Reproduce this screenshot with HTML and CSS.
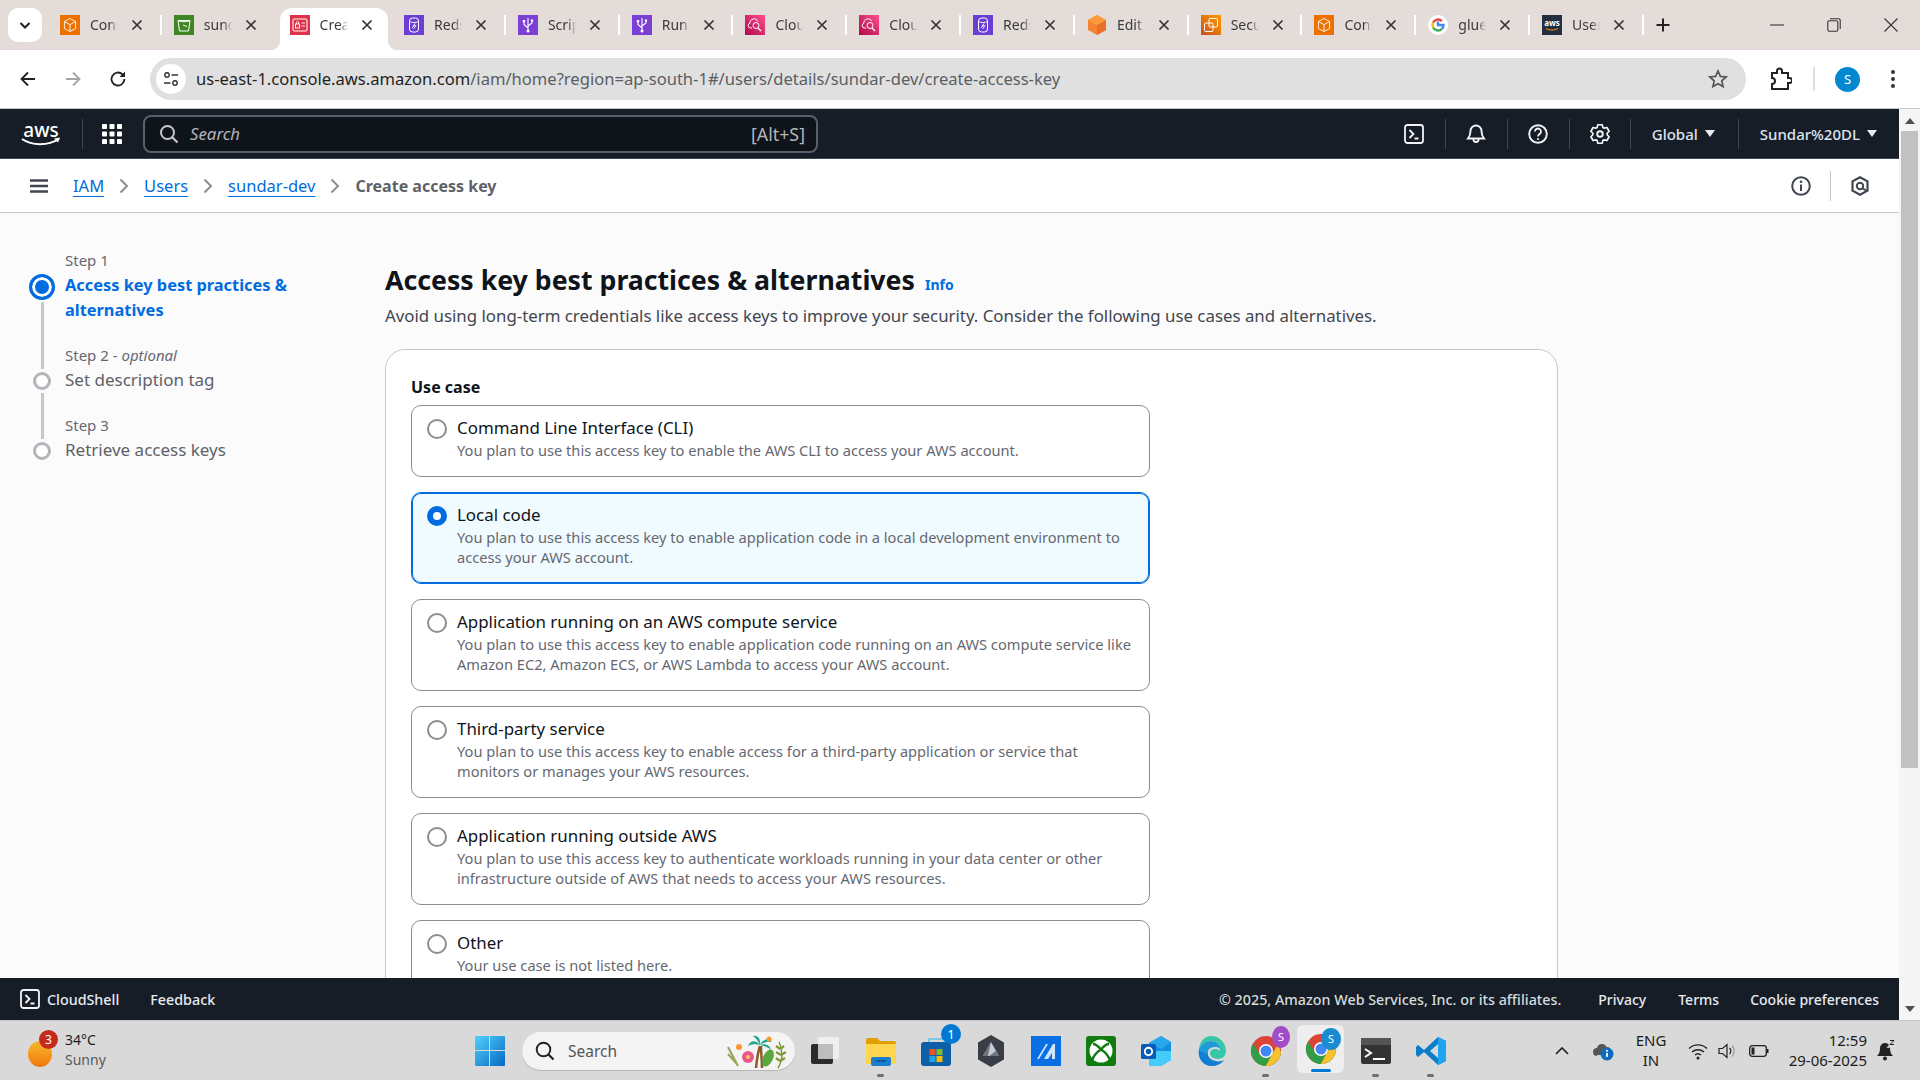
FILE: index.html
```html
<!DOCTYPE html>
<html lang="en">
<head>
<meta charset="utf-8">
<title>Create access key</title>
<link rel="stylesheet" href="styles.css">
</head>
<body>
<svg class="defs" width="0" height="0" aria-hidden="true">
  <symbol id="x" viewBox="0 0 12 12"><path d="M1.5 1.5l9 9M10.5 1.5l-9 9" fill="none" stroke="#333" stroke-width="1.7"/></symbol>
  <symbol id="cube" viewBox="0 0 20 20"><rect width="20" height="20" fill="#ed7100"/><path d="M10 3.5l5.6 3v7L10 16.5l-5.6-3v-7zM4.4 6.5L10 9.6l5.6-3.1M10 9.6v6.9" fill="none" stroke="#fff" stroke-width=".9"/></symbol>
  <symbol id="db" viewBox="0 0 20 20"><rect width="20" height="20" fill="#6b3fd4"/><rect x="5.5" y="3" width="9" height="14" rx="3" fill="none" stroke="#fff" stroke-width="1"/><path d="M5.5 6.5c2 1.4 7 1.4 9 0M8 13l2-2.400 1.800 0-2 3.200M11 8.500l-2 2.500" fill="none" stroke="#fff" stroke-width=".9"/></symbol>
  <symbol id="usb" viewBox="0 0 20 20"><rect width="20" height="20" fill="#7c3fd6"/><path d="M10 3v14M10 13L6 9.500V7M10 11l4-3V6" fill="none" stroke="#fff" stroke-width="1.100"/><circle cx="10" cy="16" r="1.500" fill="#fff"/><rect x="4.800" y="5" width="2.400" height="2.400" fill="#fff"/><circle cx="14" cy="5.500" r="1.200" fill="#fff"/></symbol>
  <symbol id="cloud" viewBox="0 0 20 20"><defs><linearGradient id="pk" x1="0" y1="1" x2="1" y2="0"><stop offset="0" stop-color="#b0084d"/><stop offset="1" stop-color="#ff4f8b"/></linearGradient></defs><rect width="20" height="20" fill="url(#pk)"/><path d="M7 13H5.500a2.500 2.500 0 0 1-.5-4.900A3.500 3.500 0 0 1 8.200 4a3.500 3.500 0 0 1 4.300 2.200" fill="none" stroke="#fff" stroke-width="1"/><circle cx="11" cy="10.500" r="3" fill="none" stroke="#fff" stroke-width="1"/><path d="M13 13l3 3" stroke="#fff" stroke-width="1.200"/></symbol>
  <symbol id="boxes" viewBox="0 0 20 20"><defs><linearGradient id="or" x1="0" y1="1" x2="1" y2="0"><stop offset="0" stop-color="#c8511b"/><stop offset="1" stop-color="#ff9900"/></linearGradient></defs><rect width="20" height="20" fill="url(#or)"/><rect x="8" y="3.500" width="8.500" height="8.500" rx="1" fill="none" stroke="#fff" stroke-width="1"/><rect x="3.500" y="8" width="8.500" height="8.500" rx="1" fill="none" stroke="#fff" stroke-width="1"/></symbol>
  <symbol id="shell" viewBox="0 0 20 20"><rect x="1" y="1" width="18" height="18" rx="2.500" fill="none" stroke="currentColor" stroke-width="1.800"/><path d="M5.500 6l4 4-4 4M10.500 14.500h4" fill="none" stroke="currentColor" stroke-width="1.800"/></symbol>
  <symbol id="chrome" viewBox="0 0 32 32"><circle cx="16" cy="16" r="15" fill="#db4437"/><path d="M16 16L3 23.500A15 15 0 0 1 3 8.500L9 18z" fill="#2f9e44"/><path d="M3 23.500A15 15 0 0 0 31 16H16z" fill="#2f9e44"/><path d="M31 16a15 15 0 0 1-15 15l7-13z" fill="#fbc02d"/><path d="M28 8.500A15 15 0 0 1 16 31l7-13z" fill="#fbc02d"/><circle cx="16" cy="16" r="7" fill="#fff"/><circle cx="16" cy="16" r="5.500" fill="#4285f4"/></symbol>
</svg>

<header class="tabstrip">
  <button class="tab-menu"><svg width="14" height="14" viewBox="0 0 14 14"><path d="M2.500 5l4.500 4.500L11.500 5" fill="none" stroke="#222" stroke-width="2"/></svg></button>
  <div class="tab"><svg class="fav"><use href="#cube"/></svg><span class="tab-label">Console Home</span><svg class="tab-x"><use href="#x"/></svg><i class="tab-sep"></i></div>
  <div class="tab"><svg class="fav" viewBox="0 0 20 20"><rect width="20" height="20" fill="#3f8624"/><path d="M4 5.500h12l-1.500 10.500h-9zM4 5.500c2 1.600 10 1.600 12 0M9 10l4 1.500" fill="none" stroke="#fff" stroke-width="1"/></svg><span class="tab-label">sundar bucket</span><svg class="tab-x"><use href="#x"/></svg></div>
  <div class="tab active"><svg class="fav" viewBox="0 0 20 20"><rect width="20" height="20" fill="#dd344c"/><rect x="3" y="4" width="14" height="12" rx="1" fill="none" stroke="#fff" stroke-width="1"/><rect x="5.500" y="9" width="4" height="4" fill="none" stroke="#fff" stroke-width=".9"/><path d="M6.500 9V7.500a1 1 0 0 1 2 0V9M11.500 8h3.500M11.500 11h3.500" fill="none" stroke="#fff" stroke-width=".9"/></svg><span class="tab-label">Create access key</span><svg class="tab-x"><use href="#x"/></svg></div>
  <div class="tab"><svg class="fav"><use href="#db"/></svg><span class="tab-label">Redshift</span><svg class="tab-x"><use href="#x"/></svg><i class="tab-sep"></i></div>
  <div class="tab"><svg class="fav"><use href="#usb"/></svg><span class="tab-label">Script editor</span><svg class="tab-x"><use href="#x"/></svg><i class="tab-sep"></i></div>
  <div class="tab"><svg class="fav"><use href="#usb"/></svg><span class="tab-label">Run details</span><svg class="tab-x"><use href="#x"/></svg><i class="tab-sep"></i></div>
  <div class="tab"><svg class="fav"><use href="#cloud"/></svg><span class="tab-label">CloudWatch</span><svg class="tab-x"><use href="#x"/></svg><i class="tab-sep"></i></div>
  <div class="tab"><svg class="fav"><use href="#cloud"/></svg><span class="tab-label">CloudWatch</span><svg class="tab-x"><use href="#x"/></svg><i class="tab-sep"></i></div>
  <div class="tab"><svg class="fav"><use href="#db"/></svg><span class="tab-label">Redshift</span><svg class="tab-x"><use href="#x"/></svg><i class="tab-sep"></i></div>
  <div class="tab"><svg class="fav" viewBox="0 0 20 20"><path d="M10 0l9 5v10l-9 5-9-5V5z" fill="#f58534"/><path d="M10 10l9-5v10l-9 5z" fill="#e8702a"/><path d="M10 0l9 5-9 5-9-5z" fill="#ff9a3c"/></svg><span class="tab-label">Edit rule</span><svg class="tab-x"><use href="#x"/></svg><i class="tab-sep"></i></div>
  <div class="tab"><svg class="fav"><use href="#boxes"/></svg><span class="tab-label">Security</span><svg class="tab-x"><use href="#x"/></svg><i class="tab-sep"></i></div>
  <div class="tab"><svg class="fav"><use href="#cube"/></svg><span class="tab-label">Console Home</span><svg class="tab-x"><use href="#x"/></svg><i class="tab-sep"></i></div>
  <div class="tab"><svg class="fav" viewBox="0 0 20 20"><circle cx="10" cy="10" r="10" fill="#fff"/><path d="M10 6.500V10h5.500a5.700 5.700 0 0 1-1.700 4" fill="none" stroke="#4285f4" stroke-width="2.400"/><path d="M13.800 14a5.500 5.500 0 0 1-8.700-1.500" fill="none" stroke="#34a853" stroke-width="2.400"/><path d="M5.100 12.500a5.500 5.500 0 0 1 0-5" fill="none" stroke="#fbbc05" stroke-width="2.400"/><path d="M5.100 7.500a5.500 5.500 0 0 1 8.700-1.400" fill="none" stroke="#ea4335" stroke-width="2.400"/></svg><span class="tab-label">glue crawler</span><svg class="tab-x"><use href="#x"/></svg><i class="tab-sep"></i></div>
  <div class="tab"><svg class="fav" viewBox="0 0 20 20"><rect width="20" height="20" fill="#232f3e"/><text x="10" y="11" class="fav-aws">aws</text><path d="M4 13.500c3.500 2 8.500 2 12 0" fill="none" stroke="#f90" stroke-width="1"/></svg><span class="tab-label">Users</span><svg class="tab-x"><use href="#x"/></svg><i class="tab-sep"></i></div>
  <svg class="new-tab" width="16" height="16" viewBox="0 0 16 16"><path d="M8 1.500v13M1.500 8h13" stroke="#222" stroke-width="2"/></svg>
  <div class="win-ctrls">
    <svg width="14" height="14" viewBox="0 0 14 14"><path d="M0 7h14" stroke="#333" stroke-width="1.100"/></svg>
    <svg width="14" height="14" viewBox="0 0 14 14"><rect x=".8" y="2.800" width="10" height="10.400" rx="1.500" fill="none" stroke="#333" stroke-width="1.100"/><path d="M3 .8h8.700a1.500 1.500 0 0 1 1.500 1.500V11" fill="none" stroke="#333" stroke-width="1.100"/></svg>
    <svg width="14" height="14" viewBox="0 0 14 14"><path d="M.5.500l13 13M13.500.500l-13 13" stroke="#333" stroke-width="1.100"/></svg>
  </div>
</header>

<nav class="toolbar">
  <div class="nav-btns">
    <svg width="18" height="18" viewBox="0 0 18 18"><path d="M16 9H3M9 2.500L2.500 9 9 15.500" fill="none" stroke="#222" stroke-width="1.800"/></svg>
    <svg width="18" height="18" viewBox="0 0 18 18"><path d="M2 9h13M9 2.500L15.500 9 9 15.500" fill="none" stroke="#a5a5a5" stroke-width="1.800"/></svg>
    <svg width="18" height="18" viewBox="0 0 18 18"><path d="M15.500 9a6.500 6.500 0 1 1-2-4.700L15.500 6" fill="none" stroke="#222" stroke-width="1.800"/><path d="M16 1.500V7h-5.500z" fill="#222"/></svg>
  </div>
  <div class="omnibox">
    <span class="site-info"><svg width="16" height="16" viewBox="0 0 16 16"><circle cx="4" cy="4" r="2.200" fill="none" stroke="#333" stroke-width="1.400"/><path d="M8.500 4H15M1 12h6.500" stroke="#333" stroke-width="1.400"/><circle cx="12" cy="12" r="2.200" fill="none" stroke="#333" stroke-width="1.400"/></svg></span>
    <span class="url"><b>us-east-1.console.aws.amazon.com</b>/iam/home?region=ap-south-1#/users/details/sundar-dev/create-access-key</span>
    <svg class="star" width="20" height="20" viewBox="0 0 20 20"><path d="M10 2l2.400 5.400 5.800.6-4.400 3.900 1.300 5.700L10 14.700l-5.100 2.900 1.300-5.700L1.800 8l5.800-.6z" fill="none" stroke="#555" stroke-width="1.700"/></svg>
  </div>
  <div class="tool-right">
    <svg class="ext" width="22" height="24" viewBox="0 0 22 24"><path d="M2 6h5V4a2.500 2.500 0 0 1 5 0v2h6v5h1.500a2.500 2.500 0 0 1 0 5H18v6H2v-5a3 3 0 0 0 0-6z" fill="none" stroke="#222" stroke-width="2"/></svg>
    <i class="tool-div"></i>
    <span class="avatar">S</span>
    <svg class="dots" width="6" height="20" viewBox="0 0 6 20"><circle cx="3" cy="3" r="2" fill="#333"/><circle cx="3" cy="10" r="2" fill="#333"/><circle cx="3" cy="17" r="2" fill="#333"/></svg>
  </div>
</nav>

<div class="window">
  <div class="console">
    <div class="awsbar">
      <a class="aws-logo"><svg width="40" height="28" viewBox="0 0 40 28"><text x="20" y="17" class="aws-text">aws</text><path d="M1 19c10 7 26 7 37 0" fill="none" stroke="#fff" stroke-width="2"/><path d="M33 18.500l6-1-2 5" fill="#fff"/></svg></a>
      <i class="bar-div logo-div"></i>
      <svg class="grid-ic" width="20" height="20" viewBox="0 0 20 20" fill="#fff"><rect width="5" height="5" rx=".8"/><rect x="7.500" width="5" height="5" rx=".8"/><rect x="15" width="5" height="5" rx=".8"/><rect y="7.500" width="5" height="5" rx=".8"/><rect x="7.500" y="7.500" width="5" height="5" rx=".8"/><rect x="15" y="7.500" width="5" height="5" rx=".8"/><rect y="15" width="5" height="5" rx=".8"/><rect x="7.500" y="15" width="5" height="5" rx=".8"/><rect x="15" y="15" width="5" height="5" rx=".8"/></svg>
      <div class="aws-search">
        <svg width="20" height="20" viewBox="0 0 20 20"><circle cx="8.500" cy="8.500" r="6.500" fill="none" stroke="#c6c6cd" stroke-width="2"/><path d="M13 13l5.500 5.500" stroke="#c6c6cd" stroke-width="2.200"/></svg>
        <span class="ph">Search</span>
        <span class="kbd">[Alt+S]</span>
      </div>
      <div class="bar-right">
        <svg class="bar-ic" viewBox="0 0 20 20"><use href="#shell"/></svg>
        <i class="bar-div"></i>
        <svg class="bar-ic" viewBox="0 0 20 20"><path d="M10 1.500a5.500 5.500 0 0 1 5.500 5.500c0 4 .8 5.500 2.500 7.500H2c1.700-2 2.500-3.500 2.500-7.500A5.500 5.500 0 0 1 10 1.500zM7.500 15.500a2.500 2.500 0 0 0 5 0" fill="none" stroke="currentColor" stroke-width="1.900"/></svg>
        <i class="bar-div"></i>
        <svg class="bar-ic" viewBox="0 0 20 20"><circle cx="10" cy="10" r="8.800" fill="none" stroke="currentColor" stroke-width="1.900"/><path d="M7 7.500a3 3 0 1 1 4.500 2.600c-1 .6-1.500 1.100-1.500 2.400" fill="none" stroke="currentColor" stroke-width="1.800"/><circle cx="10" cy="15" r="1.100" fill="currentColor"/></svg>
        <i class="bar-div"></i>
        <svg class="bar-ic gear" viewBox="0 0 20 20"><path d="M7.070 3.420L7.860.75h4.280l.79 2.670 1.300.76 2.710-.66 2.140 3.700-1.920 2.020v1.520l1.920 2.020-2.140 3.700-2.710-.66-1.300.76-.79 2.670H7.860l-.79-2.670-1.300-.76-2.710.66-2.140-3.700 1.920-2.020V9.240L.92 7.220l2.140-3.700 2.710.66z" fill="none" stroke="currentColor" stroke-width="1.700" stroke-linejoin="round"/><circle cx="10" cy="10" r="2.800" fill="none" stroke="currentColor" stroke-width="1.900"/></svg>
        <i class="bar-div"></i>
        <span class="bar-menu region">Global <i class="caret"></i></span>
        <i class="bar-div"></i>
        <span class="bar-menu account">Sundar%20DL <i class="caret"></i></span>
      </div>
    </div>

    <div class="crumbs">
      <svg class="burger" width="18" height="14" viewBox="0 0 18 14"><path d="M0 1.500h18M0 7h18M0 12.500h18" stroke="#424650" stroke-width="2.400"/></svg>
      <a class="crumb">IAM</a>
      <svg class="chev" width="10" height="16" viewBox="0 0 10 16"><path d="M1.500 1.500L8 8l-6.500 6.500" fill="none" stroke="#8c8c94" stroke-width="2"/></svg>
      <a class="crumb">Users</a>
      <svg class="chev" width="10" height="16" viewBox="0 0 10 16"><path d="M1.500 1.500L8 8l-6.500 6.500" fill="none" stroke="#8c8c94" stroke-width="2"/></svg>
      <a class="crumb">sundar-dev</a>
      <svg class="chev" width="10" height="16" viewBox="0 0 10 16"><path d="M1.500 1.500L8 8l-6.500 6.500" fill="none" stroke="#8c8c94" stroke-width="2"/></svg>
      <span class="crumb-current">Create access key</span>
      <div class="crumb-tools">
        <svg width="20" height="20" viewBox="0 0 20 20"><circle cx="10" cy="10" r="8.800" fill="none" stroke="#424650" stroke-width="2"/><path d="M10 8.500V15" stroke="#424650" stroke-width="2"/><circle cx="10" cy="5.700" r="1.300" fill="#424650"/></svg>
        <i class="crumb-div"></i>
        <svg width="18" height="20" viewBox="0 0 18 20"><path d="M9 1.200l7.500 4.200v9.200L9 18.800l-7.500-4.200V5.400z" fill="none" stroke="#424650" stroke-width="2.200"/><circle cx="9" cy="10" r="3.200" fill="none" stroke="#424650" stroke-width="2"/><path d="M11 12l5 3" stroke="#424650" stroke-width="2"/></svg>
      </div>
    </div>

    <div class="content">
      <ol class="steps">
        <li class="step">
          <div class="step-label">Step 1</div>
          <div class="track"><i class="dot current"></i><i class="line first"></i></div>
          <div class="step-title current-title">Access key best practices &amp; alternatives</div>
        </li>
        <li class="step">
          <div class="step-label">Step 2 - <em>optional</em></div>
          <div class="track"><i class="dot"></i><i class="line"></i></div>
          <div class="step-title">Set description tag</div>
        </li>
        <li class="step">
          <div class="step-label">Step 3</div>
          <div class="track"><i class="dot"></i></div>
          <div class="step-title">Retrieve access keys</div>
        </li>
      </ol>
      <main class="main">
        <div class="head"><h1>Access key best practices &amp; alternatives</h1><a class="info">Info</a></div>
        <p class="lede">Avoid using long-term credentials like access keys to improve your security. Consider the following use cases and alternatives.</p>
        <section class="card">
          <div class="field-label">Use case</div>
          <div class="options">
            <label class="option"><i class="radio"></i><div class="opt-text"><div class="opt-title">Command Line Interface (CLI)</div><div class="opt-desc">You plan to use this access key to enable the AWS CLI to access your AWS account.</div></div></label>
            <label class="option selected"><i class="radio on"></i><div class="opt-text"><div class="opt-title">Local code</div><div class="opt-desc">You plan to use this access key to enable application code in a local development environment to access your AWS account.</div></div></label>
            <label class="option"><i class="radio"></i><div class="opt-text"><div class="opt-title">Application running on an AWS compute service</div><div class="opt-desc">You plan to use this access key to enable application code running on an AWS compute service like Amazon EC2, Amazon ECS, or AWS Lambda to access your AWS account.</div></div></label>
            <label class="option"><i class="radio"></i><div class="opt-text"><div class="opt-title">Third-party service</div><div class="opt-desc">You plan to use this access key to enable access for a third-party application or service that monitors or manages your AWS resources.</div></div></label>
            <label class="option"><i class="radio"></i><div class="opt-text"><div class="opt-title">Application running outside AWS</div><div class="opt-desc">You plan to use this access key to authenticate workloads running in your data center or other infrastructure outside of AWS that needs to access your AWS resources.</div></div></label>
            <label class="option"><i class="radio"></i><div class="opt-text"><div class="opt-title">Other</div><div class="opt-desc">Your use case is not listed here.</div></div></label>
          </div>
        </section>
      </main>
    </div>

    <footer class="foot">
      <svg class="foot-ic" viewBox="0 0 20 20"><use href="#shell"/></svg>
      <span class="foot-cs">CloudShell</span>
      <span class="foot-fb">Feedback</span>
      <span class="foot-copy">© 2025, Amazon Web Services, Inc. or its affiliates.</span>
      <span class="foot-priv">Privacy</span>
      <span class="foot-terms">Terms</span>
      <span class="foot-cookie">Cookie preferences</span>
    </footer>
  </div>
  <aside class="scrollbar">
    <i class="arrow up"></i>
    <i class="thumb"></i>
    <i class="arrow down"></i>
  </aside>
</div>

<footer class="taskbar">
  <div class="weather">
    <span class="sun"><b class="badge red">3</b></span>
    <div class="wx-text"><div>34°C</div><div class="wx-sub">Sunny</div></div>
  </div>
  <svg class="win-logo" width="30" height="30" viewBox="0 0 30 30"><defs><linearGradient id="w" x1="0" y1="0" x2="1" y2="1"><stop offset="0" stop-color="#52d1fb"/><stop offset="1" stop-color="#0669c4"/></linearGradient></defs><path d="M1 0h13v14H0V1a1 1 0 0 1 1-1zM15 0h14a1 1 0 0 1 1 1v13H15zM0 15h14v15H1a1 1 0 0 1-1-1zM15 15h15v14a1 1 0 0 1-1 1H15z" fill="url(#w)"/></svg>
  <div class="task-search">
    <svg width="20" height="20" viewBox="0 0 20 20"><circle cx="8.500" cy="8.500" r="6.800" fill="none" stroke="#222" stroke-width="1.900"/><path d="M13.500 13.500l5 5" stroke="#222" stroke-width="2.200"/></svg>
    <span>Search</span>
    <svg class="palm" width="66" height="38" viewBox="0 0 66 38"><path d="M3 15l10 19M3 22l9 10" stroke="#9aa35a" stroke-width="2" fill="none"/><circle cx="14" cy="15" r="3" fill="#f59c2d"/><circle cx="23" cy="25" r="6" fill="#e9578e"/><circle cx="23" cy="25" r="2" fill="#f6d04d"/><path d="M31 36c1-10 2-16 4-22M37 36c0-8-1-14-1-22" stroke="#8a5a2b" stroke-width="2.500" fill="none"/><path d="M35 13c-5-6-10-4-12 1 4-2 8-2 12-1zM35 13c1-7-3-10-7-9 3 2 5 5 7 9zM35 13c4-7 9-7 12-3-4-1-8 0-12 3zM35 13c5-2 10 0 11 5-3-3-7-4-11-5z" fill="#22a78a"/><ellipse cx="43" cy="26" rx="5" ry="9" fill="#58a83e" transform="rotate(25 43 26)"/><circle cx="44" cy="7" r="2.500" fill="#f59c2d"/><path d="M54 10c4 8 4 18-1 26" stroke="#7e9a3a" stroke-width="1.500" fill="none"/><path d="M51 14l4 3M59 14l-4 3M51 20l5 3M61 20l-5 3M51 26l4 3M60 26l-5 3" stroke="#7e9a3a" stroke-width="2.200"/></svg>
  </div>
  <div class="task-apps">
    <div class="app task-view"><svg width="30" height="30" viewBox="0 0 30 30"><rect x="2" y="8" width="22" height="20" rx="2" fill="#2b2b2b"/><rect x="9" y="1" width="21" height="22" rx="2" fill="#f2f2f2" opacity=".85"/><rect x="9" y="8" width="15" height="15" fill="#bdbdbd"/></svg></div>
    <div class="app running"><svg width="30" height="30" viewBox="0 0 30 30"><path d="M0 4a2 2 0 0 1 2-2h9l3 3h14a2 2 0 0 1 2 2v21H0z" fill="#e0a100"/><path d="M0 8h30v20H0z" fill="#fdd54f"/><rect x="5" y="21" width="20" height="9" rx="2" fill="#1a7fcf"/><path d="M10 25h10" stroke="#0c4f8a" stroke-width="1.500"/></svg></div>
    <div class="app"><svg width="30" height="30" viewBox="0 0 30 30"><path d="M8 6V3h14" fill="none" stroke="#5cc2ee" stroke-width="1.500"/><rect x="0" y="6" width="30" height="24" rx="3" fill="#0d5fa8"/><rect x="8.500" y="13" width="6" height="6" fill="#e8532b"/><rect x="15.500" y="13" width="6" height="6" fill="#7fba2a"/><rect x="8.500" y="20" width="6" height="6" fill="#1da6e8"/><rect x="15.500" y="20" width="6" height="6" fill="#fbbc05"/></svg><b class="badge blue">1</b></div>
    <div class="app"><svg width="28" height="34" viewBox="0 0 28 34"><path d="M14 1l13 7.500v17L14 33 1 25.500v-17z" fill="#3a3f47"/><path d="M14 8l8 14H6z" fill="#c9ced4"/><path d="M14 8l-3 14H6zM12 22h10l-3-5z" fill="#6f757e"/></svg></div>
    <div class="app"><svg width="30" height="30" viewBox="0 0 30 30"><rect width="30" height="30" fill="#0a6fe3"/><path d="M6 23L15 8h2L8 23zM13 23l9-15h2v15h-3v-6l-4 6z" fill="#cfe6ff"/></svg></div>
    <div class="app"><svg width="30" height="30" viewBox="0 0 30 30"><rect width="30" height="30" rx="3" fill="#107c10"/><circle cx="15" cy="15" r="11.500" fill="#fff"/><path d="M15 13.500C12 10 9 8 7 8M15 13.500C18 10 21 8 23 8M6 24c2-5 5-8 9-10.500 4 2.500 7 5.500 9 10.500" fill="none" stroke="#107c10" stroke-width="2.500"/></svg></div>
    <div class="app"><svg width="30" height="32" viewBox="0 0 30 32"><path d="M8 8l12-7 10 6v18l-10 6H8z" fill="#1490df"/><path d="M20 1l10 6-10 7-12-6z" fill="#28a8ea"/><path d="M8 16h22v9l-10 6H8z" fill="#50d9ff" opacity=".8"/><rect x="0" y="9" width="15" height="15" rx="1.500" fill="#0a5bb5"/><circle cx="7.500" cy="16.500" r="3.700" fill="none" stroke="#fff" stroke-width="1.900"/></svg></div>
    <div class="app"><svg width="30" height="32" viewBox="0 0 30 32"><path d="M15 1a15 15 0 0 1 15 15c0 5-4 8-8 8-5 0-8-3-8-6 0-2 2-4 5-4 4 0 5 2 5 2C24 9 20 6 15 6 9 6 5 10 3 14 4 6 9 1 15 1z" fill="#37c6a8"/><path d="M3 14C1 24 8 31 15 31c6 0 10-2 13-6-2 1-5 2-8 1-7-1-9-6-8-10-4 0-7 0-9-2z" fill="#0f7ed4"/><path d="M3 14c2-4 6-8 12-8 5 0 9 3 9 8 0 0-1-2-5-2-6 0-8 4-7 7-4-1-8-2-9-5z" fill="#1f9bd9"/></svg></div>
    <div class="app running"><svg width="32" height="32"><use href="#chrome"/></svg><b class="badge purple">S</b></div>
    <div class="app active running"><svg width="32" height="32"><use href="#chrome"/></svg><b class="badge sky">S</b></div>
    <div class="app running"><svg width="30" height="26" viewBox="0 0 30 26"><rect width="30" height="26" rx="2" fill="#333"/><rect width="30" height="7" fill="#555"/><path d="M4 11l6 4-6 4M12 21h12" fill="none" stroke="#fff" stroke-width="2"/></svg></div>
    <div class="app running"><svg width="30" height="30" viewBox="0 0 30 30"><path d="M22 1l8 4v20l-8 4-14-13L2 21l-2-2v-8l2-2 6 5z" fill="#0a7ec9"/><path d="M22 1l8 4v20l-8 4z" fill="#1fa4f1"/><path d="M22 8l-8 7 8 7z" fill="#d9d9d9"/></svg></div>
  </div>
  <div class="tray">
    <svg class="t-caret" width="14" height="9" viewBox="0 0 14 9"><path d="M1 8l6-6 6 6" fill="none" stroke="#222" stroke-width="1.600"/></svg>
    <svg class="t-cloud" width="22" height="20" viewBox="0 0 22 20"><path d="M5 15a4 4 0 0 1 0-8 5 5 0 0 1 9.500-1A4 4 0 0 1 15 14H5z" fill="#555"/><circle cx="15" cy="13" r="6.500" fill="#0f6cbd"/><path d="M15 12v4" stroke="#fff" stroke-width="1.800"/><circle cx="15" cy="9.800" r="1.100" fill="#fff"/></svg>
    <div class="t-lang"><div>ENG</div><div>IN</div></div>
    <svg class="t-wifi" width="20" height="18" viewBox="0 0 20 18"><path d="M1 6.500a13 13 0 0 1 18 0M4 10a9 9 0 0 1 12 0M7 13a4.500 4.500 0 0 1 6 0" fill="none" stroke="#222" stroke-width="1.400"/><circle cx="10" cy="16" r="1.500" fill="#222"/></svg>
    <svg class="t-vol" width="20" height="18" viewBox="0 0 20 18"><path d="M1 6.500h3.500L9 2.500v13l-4.500-4H1z" fill="none" stroke="#222" stroke-width="1.200"/><path d="M11.500 6a4 4 0 0 1 0 6" fill="none" stroke="#222" stroke-width="1.200"/><path d="M14 3.500a8 8 0 0 1 0 11" fill="none" stroke="#999" stroke-width="1.200"/></svg>
    <svg class="t-bat" width="20" height="12" viewBox="0 0 20 12"><rect x=".7" y=".7" width="16.600" height="10.600" rx="2.500" fill="none" stroke="#222" stroke-width="1.300"/><rect x="2.500" y="2.500" width="3" height="7" fill="#222"/><path d="M18.500 4v4" stroke="#222" stroke-width="2"/></svg>
    <div class="t-clock"><div>12:59</div><div>29-06-2025</div></div>
    <svg class="t-bell" width="18" height="22" viewBox="0 0 18 22"><path d="M8 3a5 5 0 0 1 5 5c0 4 1 6 3 8H0c2-2 3-4 3-8a5 5 0 0 1 5-5z" fill="#222"/><circle cx="8" cy="18.500" r="2" fill="#222"/><path d="M11 2h5l-5 5h5" fill="none" stroke="#d9d9d9" stroke-width="1.400"/><path d="M13 .5h4l-4 4h4" fill="none" stroke="#222" stroke-width="1"/></svg>
  </div>
</footer>
</body>
</html>
```

FILE: styles.css
```css
* { box-sizing: border-box; }
html, body { margin: 0; padding: 0; }
body {
  width: 1920px; height: 1080px; overflow: hidden;
  display: flex; flex-direction: column;
  font-family: "Noto Sans", "Open Sans", sans-serif;
  background: #fff; color: #0f141a;
}
.defs { display: block; width: 0; height: 0; }
i { font-style: normal; display: block; }
a { color: inherit; }

/* Tab strip */
.tabstrip {
  height: 50px; flex: none; background: #e3dcd9;
  display: flex; padding-left: 8px; align-items: flex-start;
}
.tab-menu {
  width: 34px; height: 34px; margin-top: 8px; margin-right: 6px; padding: 0; border: 0;
  border-radius: 10px; background: #fff; display: flex; align-items: center; justify-content: center;
}
.tab {
  width: 113.8px; height: 42px; margin-top: 8px; flex: none;
  display: flex; align-items: center; padding: 0 0 8px 12px; position: relative;
}
.fav { width: 20px; height: 20px; flex: none; }
.fav-aws { font: 700 8px "Noto Sans", sans-serif; fill: #fff; text-anchor: middle; }
.tab-label {
  width: 28px; margin-left: 10px; overflow: hidden; white-space: nowrap;
  font-size: 14px; line-height: 20px; color: #3b3b3b;
  -webkit-mask-image: linear-gradient(90deg, #000 70%, transparent);
  mask-image: linear-gradient(90deg, #000 70%, transparent);
}
.tab-x { width: 12px; height: 12px; margin-left: 13px; flex: none; }
.tab-sep { width: 2px; height: 20px; margin-left: auto; background: #fff; }
.tab.active { background: #fff; border-radius: 12px 12px 0 0; width: 108px; margin-left: 4px; margin-right: 4.500px; padding-left: 10px; }
.tab.active::before, .tab.active::after {
  content: ""; position: absolute; bottom: 0; width: 10px; height: 10px;
}
.tab.active::before { left: -10px; background: radial-gradient(circle at 0 0, transparent 10px, #fff 10.500px); }
.tab.active::after { right: -10px; background: radial-gradient(circle at 100% 0, transparent 10px, #fff 10.500px); }
.new-tab { margin: 17px 0 0 11px; flex: none; }
.win-ctrls {
  margin-left: auto; margin-top: 18px; padding-right: 22px;
  display: flex; gap: 43px;
}

/* Toolbar */
.toolbar {
  height: 59px; flex: none; background: #fff; border-radius: 14px 14px 0 0;
  display: flex; align-items: center;
  border-bottom: 1px solid #c9c9c9;
}
.nav-btns { display: flex; gap: 27px; padding-left: 19px; width: 150px; }
.omnibox {
  width: 1596px; height: 42px; border-radius: 21px; background: #e0e0e0;
  display: flex; align-items: center; padding: 0 18px 0 6px;
}
.site-info {
  width: 30px; height: 30px; border-radius: 50%; background: #fff;
  display: flex; align-items: center; justify-content: center; flex: none;
}
.url { margin-left: 10px; font-size: 16.57px; line-height: 22px; color: #5b5e63; white-space: nowrap; }
.url b { font-weight: 400; color: #1f1f1f; }
.star { margin-left: auto; }
.tool-right { display: flex; align-items: center; padding-left: 24px; }
.tool-div { width: 2px; height: 24px; background: #e3dcd9; margin: 0 20px 0 21px; }
.avatar {
  width: 25px; height: 25px; border-radius: 50%; background: #0288d1; color: #fff;
  font-size: 13px; display: flex; align-items: center; justify-content: center;
}
.dots { margin-left: 30px; }

/* Console */
.window { flex: 1; display: flex; min-height: 0; }
.console { flex: 1; min-width: 0; display: flex; flex-direction: column; }
.awsbar {
  height: 50px; flex: none; background: #161d26; color: #fff;
  display: flex; align-items: center; border-bottom: 1px solid #414750;
}
.aws-logo { margin-left: 21px; display: flex; }
.aws-text { font: 500 19px "Noto Sans", sans-serif; fill: #fff; text-anchor: middle; }
.bar-div { width: 1px; height: 30px; background: #424650; flex: none; }
.logo-div { margin-left: 21px; }
.grid-ic { margin-left: 19px; }
.aws-search {
  width: 675px; height: 38px; margin-left: 21px; background: #0f141a;
  border: 2px solid #5a5f6a; border-radius: 8px;
  display: flex; align-items: center; padding: 0 11px 0 14px; font-size: 16.800px;
}
.ph { margin-left: 11px; font-style: italic; color: #b4b4bb; }
.kbd { margin-left: auto; color: #b4b4bb; font-size: 17.800px; }
.bar-right { margin-left: auto; display: flex; align-items: center; }
.bar-ic { width: 20px; height: 20px; margin: 0 20.500px; color: #f3f3f7; display: block; }
.gear { margin-right: 19.500px; }
.bar-menu { font-size: 15px; color: #dde4ee; display: flex; align-items: center; font-weight: 500; white-space: nowrap; }
.caret { width: 0; height: 0; border: 5px solid transparent; border-top: 7px solid #e8edf3; border-bottom: 0; margin-left: 7px; }
.region { margin: 0 23px 0 21px; }
.account { margin: 0 22px 0 21px; }

.crumbs {
  height: 54px; flex: none; background: #fff; border-bottom: 1px solid #c6c6cd;
  display: flex; align-items: center; padding-left: 30px; font-size: 16.500px;
}
.burger { margin-right: 25px; }
.crumb { color: #006ce0; text-decoration: underline; text-underline-offset: 4px; }
.chev { margin: 0 15px 0 15px; }
.crumb-current { color: #5f6169; font-weight: 700; font-size: 16px; }
.crumb-tools { margin-left: auto; display: flex; align-items: center; padding-right: 30px; }
.crumb-div { width: 1px; height: 30px; background: #c6c6cd; margin: 0 20px 0 19px; }

.content { flex: 1; min-height: 0; overflow: hidden; display: flex; background: #fbfbfb; }
.steps { width: 385px; flex: none; list-style: none; margin: 0; padding: 37px 0 0 29px; }
.step {
  display: grid; grid-template-columns: 26px 1fr; column-gap: 10px;
  margin-bottom: 22.500px; font-size: 17px; width: 260px;
}
.step-label { grid-column: 2; font-size: 15px; line-height: 20px; margin-bottom: 3px; color: #656871; }
.step-label em { font-style: italic; }
.track { grid-column: 1; height: 0; display: flex; flex-direction: column; align-items: center; }
.dot { width: 18px; height: 18px; border-radius: 50%; border: 3px solid #b4b4bb; background: #fff; margin-top: 4px; flex: none; }
.dot.current { width: 26px; height: 26px; margin-top: 1px; border: 3px solid #006ce0; background: #006ce0; box-shadow: inset 0 0 0 3px #fff; }
.line { width: 3px; height: 46px; margin-top: 3px; background: #c6c6cd; flex: none; }
.line.first { height: 67px; margin-top: 2px; }
.step-title { grid-column: 2; line-height: 24.500px; color: #5f6169; }
.current-title { color: #006ce0; font-weight: 700; font-size: 16.36px; }

.main { flex: 1; padding-top: 47px; }
.head { display: flex; align-items: baseline; height: 40px; }
h1 { margin: 0; font-size: 26.7px; line-height: 40px; font-weight: 700; color: #0f141a; }
.info { margin-left: 10px; font-size: 14px; font-weight: 700; color: #006ce0; }
.lede { margin: 4px 0 21px; font-size: 16.84px; line-height: 24px; color: #424650; white-space: nowrap; }
.card {
  width: 1173px; padding: 26px 25px 0; background: #fff;
  border: 1px solid #c6c6cd; border-radius: 20px 20px 0 0; height: 700px;
}
.field-label { font-size: 16px; line-height: 22px; font-weight: 700; color: #0f141a; margin-bottom: 7px; }
.options { display: flex; flex-direction: column; gap: 15px; width: 739px; }
.option {
  display: flex; border: 1px solid #8c8c94; border-radius: 10px; background: #fff;
  padding: 9px 16px 16px 15px;
}
.option.selected { border-color: #006ce0; background: #f0fbff; box-shadow: inset 0 0 0 1px #006ce0; }
.radio { width: 20px; height: 20px; border-radius: 50%; border: 2px solid #8c8c94; background: #fff; margin-top: 4px; flex: none; }
.radio.on { border: 6px solid #006ce0; }
.opt-text { margin-left: 10px; min-width: 0; }
.opt-title { font-size: 16.9px; line-height: 25px; color: #0f141a; }
.opt-desc { font-size: 14.64px; line-height: 20px; color: #656871; }

.foot {
  height: 42px; flex: none; background: #161d26; color: #e6ebf2; font-size: 14px; font-weight: 500;
  display: flex; align-items: center; position: relative; z-index: 1;
}
.foot-ic { width: 20px; height: 20px; margin-left: 20px; color: #f3f3f7; flex: none; }
.foot-cs { margin-left: 7px; font-size: 14.300px; }
.foot-fb { margin-left: 31px; font-size: 14.300px; }
.foot-copy { margin-left: auto; color: #d5dbdb; font-size: 14.300px; }
.foot-priv { margin-left: 37px; }
.foot-terms { margin-left: 32px; }
.foot-cookie { margin-left: 31px; margin-right: 20px; }

.scrollbar {
  width: 21px; flex: none; background: #f5f5f5; display: flex; flex-direction: column; align-items: center;
  padding: 9px 0 8px;
}
.arrow { width: 0; height: 0; border: 5px solid transparent; flex: none; }
.arrow.up { border-bottom: 6px solid #505050; border-top: 0; }
.arrow.down { border-top: 6px solid #505050; border-bottom: 0; margin-top: auto; }
.thumb { width: 17px; height: 637px; background: #c1c1c1; margin-top: 7px; flex: none; }

/* Taskbar */
.taskbar {
  height: 60px; flex: none; background: #d9d9d9; display: flex; align-items: center;
  border-top: 1px solid #c4c4c4;
}
.weather { display: flex; align-items: center; width: 475px; padding-left: 28px; }
.sun {
  width: 24px; height: 26px; border-radius: 50%; background: linear-gradient(#f4b92a, #f4780f);
  position: relative; flex: none; margin-top: 6px;
}
.badge {
  position: absolute; display: flex; align-items: center; justify-content: center;
  border-radius: 50%; color: #fff; font-weight: 400;
}
.badge.red { width: 19px; height: 19px; right: -6px; top: -11px; background: #c42b1c; font-size: 12px; }
.wx-text { margin-left: 13px; font-size: 14px; line-height: 20px; color: #1c1c1c; margin-top: -2px; }
.wx-sub { color: #5a5a5a; }
.win-logo { flex: none; }
.task-search {
  width: 273px; height: 38px; margin-left: 17px; border-radius: 19px; background: #f4f4f4;
  display: flex; align-items: center; padding: 0 4px 0 13px; font-size: 15.500px; color: #555;
  box-shadow: 0 1px 0 #b5b5b5; flex: none;
}
.task-search span { margin-left: 13px; }
.palm { margin-left: auto; }
.task-apps { display: flex; margin-left: 3px; }
.app {
  width: 55px; height: 52px; display: flex; align-items: center; justify-content: center;
  position: relative; flex: none;
}
.task-view { padding-right: 3px; }
.app.running::after {
  content: ""; position: absolute; left: 50%; margin-left: -3.500px; bottom: 0; width: 7px; height: 3px;
  border-radius: 2px; background: #6e6e6e;
}
.app.active { background: #eee; border-radius: 6px; width: 47px; margin: 0 4px; height: 48px; }
.app.active::after { width: 20px; margin-left: -10px; background: #0078d4; bottom: 1px; }
.badge.blue { width: 20px; height: 20px; right: 2px; top: -1px; background: #0078d4; font-size: 13px; }
.badge.purple { width: 18px; height: 22px; right: 3px; top: 1px; background: #a24cc8; font-size: 11px; }
.badge.sky { width: 20px; height: 22px; right: 3px; top: 3px; background: #1a8bd0; font-size: 11px; }
.tray { flex: 1; display: flex; align-items: center; font-size: 15px; color: #1c1c1c; }
.t-caret { margin-left: 97px; }
.t-cloud { margin-left: 23px; }
.t-lang { margin-left: 19px; line-height: 20px; text-align: center; width: 36px; margin-top: -2px; }
.t-wifi { margin-left: 19px; }
.t-vol { margin-left: 10px; }
.t-bat { margin-left: 11px; }
.t-clock { margin-left: auto; line-height: 20px; text-align: right; margin-top: -2px; }
.t-bell { margin: 0 25px 0 10px; }
```
